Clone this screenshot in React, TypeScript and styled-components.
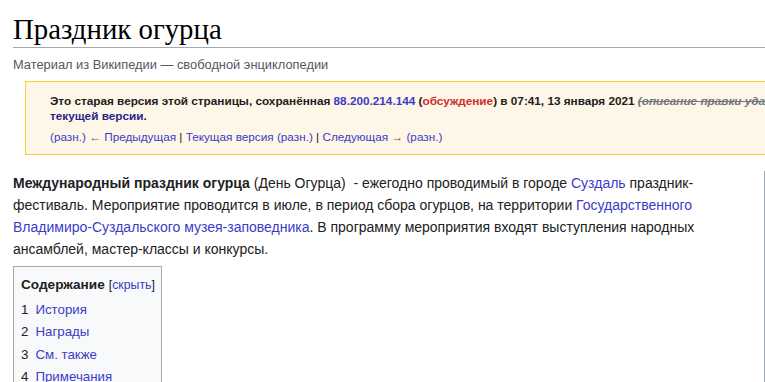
import React from "react";
import styled, { createGlobalStyle } from "styled-components";

const GlobalStyle = createGlobalStyle`
  html, body {
    margin: 0;
    padding: 0;
    background: #ffffff;
    overflow: hidden;
  }
  body {
    font-family: "Liberation Sans", Arial, sans-serif;
    color: #202122;
  }
`;

const Page = styled.div`
  margin-left: 13px;
  width: 1000px;
`;

const Heading = styled.h1`
  margin: 11px 0 0;
  font-family: "Liberation Serif", "Times New Roman", serif;
  font-weight: normal;
  font-size: 28.8px;
  line-height: 36px;
  color: #000000;
  border-bottom: 1px solid #a2a9b1;
`;

const SiteSub = styled.div`
  margin-top: 9px;
  font-size: 12.85px;
  line-height: 16px;
  color: #54595d;
`;

const Notice = styled.div`
  margin: 8px 0 0 12px;
  width: 860px;
  padding: 11px 24px 10px;
  background: #fef6e7;
  border: 1px solid #fc3;
  font-size: 11.76px;
  line-height: 15px;
`;

const RevisionInfo = styled.div`
  font-weight: bold;
`;

const NoWrap = styled.span`
  white-space: nowrap;
`;

const Link = styled.a<{ $tone?: "visited" | "red" }>`
  color: ${(p) =>
    p.$tone === "visited" ? "#2a1f8f" : p.$tone === "red" ? "#d12d2d" : "#3b3cc6"};
  text-decoration: none;
`;

const Deleted = styled.span`
  color: #72777d;
  font-style: italic;
  text-decoration: line-through;
`;

const RevisionNav = styled.div`
  margin-top: 6px;
`;

const Arrow = styled.span`
  color: #54595d;
`;

const Body = styled.div`
  display: flex;
  align-items: flex-start;
  margin-top: 17px;
`;

const Main = styled.div`
  width: 737px;
  flex: 0 0 737px;
`;

const Paragraph = styled.p`
  margin: 0;
  font-size: 14px;
  line-height: 22px;
`;

const Infobox = styled.aside`
  margin-left: 14px;
  margin-top: -1px;
  flex: 0 0 240px;
  height: 320px;
  background: #f8f9fa;
  border: 1px solid #a2a9b1;
`;

const Toc = styled.div`
  display: inline-block;
  margin-top: 6px;
  width: 133px;
  padding: 8px 7px 0;
  background: #f8f9fa;
  border: 1px solid #a2a9b1;
  font-size: 13.3px;
`;

const TocTitle = styled.div`
  line-height: 20px;
  white-space: nowrap;
  strong {
    font-size: 13.6px;
  }
`;

const Toggle = styled.span`
  font-size: 12.3px;
  margin-left: 4px;
`;

const TocList = styled.ol`
  list-style: none;
  margin: 4px 0 0;
  padding: 0;
`;

const TocItem = styled.li`
  line-height: 21px;
  margin-bottom: 1.3px;
  white-space: nowrap;
`;

const TocNumber = styled.span`
  display: inline-block;
  margin-right: 7px;
  color: #202122;
`;

const sections = ["История", "Награды", "См. также", "Примечания", "Ссылки"];

const App = () => {
  return (
    <>
      <GlobalStyle />
      <Page>
        <Heading>Праздник огурца</Heading>
        <SiteSub>Материал из Википедии — свободной энциклопедии</SiteSub>
        <Notice>
          <RevisionInfo>
            <NoWrap>
              Это старая версия этой страницы, сохранённая{" "}
              <Link href="#">88.200.214.144</Link> (
              <Link href="#" $tone="red">
                обсуждение
              </Link>
              ) в 07:41, 13 января 2021 <Deleted>(описание правки удалена)</Deleted>. Она
              может существенно отличаться от
            </NoWrap>{" "}
            <Link href="#" $tone="visited">
              текущей версии
            </Link>
            .
          </RevisionInfo>
          <RevisionNav>
            <Link href="#">(разн.)</Link> <Arrow>←</Arrow> <Link href="#">Предыдущая</Link> |{" "}
            <Link href="#">Текущая версия</Link> <Link href="#">(разн.)</Link> |{" "}
            <Link href="#">Следующая</Link> <Arrow>→</Arrow> <Link href="#">(разн.)</Link>
          </RevisionNav>
        </Notice>
        <Body>
          <Main>
            <Paragraph>
              <b>Международный праздник огурца</b> (День Огурца)&nbsp; - ежегодно проводимый в
              городе <Link href="#">Суздаль</Link> праздник-фестиваль. Мероприятие проводится в
              июле, в период сбора огурцов, на территории{" "}
              <Link href="#">Государственного Владимиро-Суздальского музея-заповедника</Link>. В
              программу мероприятия входят выступления народных ансамблей, мастер-классы и
              конкурсы.
            </Paragraph>
            <Toc>
              <TocTitle>
                <strong>Содержание</strong>
                <Toggle>
                  [<Link href="#">скрыть</Link>]
                </Toggle>
              </TocTitle>
              <TocList>
                {sections.map((s, i) => (
                  <TocItem key={s}>
                    <TocNumber>{i + 1}</TocNumber>
                    <Link href="#">{s}</Link>
                  </TocItem>
                ))}
              </TocList>
            </Toc>
          </Main>
          <Infobox />
        </Body>
      </Page>
    </>
  );
};

export default App;
